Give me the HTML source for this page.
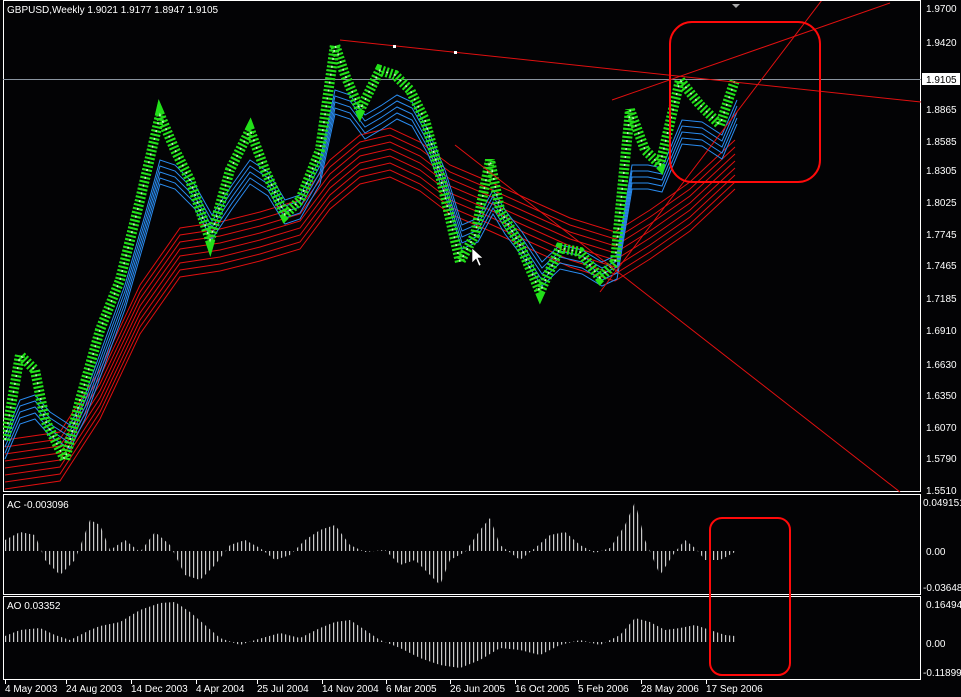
<!DOCTYPE html>
<html><head><style>
html,body{margin:0;padding:0;background:#030305;}
body{width:961px;height:697px;overflow:hidden;position:relative;font-family:"Liberation Sans",sans-serif;}
svg{position:absolute;left:0;top:0}
text{font-family:"Liberation Sans",sans-serif;font-size:10px;fill:#fff}
</style></head><body>
<svg width="961" height="697" viewBox="0 0 961 697">
<defs>
<pattern id="bars" width="4" height="200" patternUnits="userSpaceOnUse">
<rect x="1" y="0" width="1.2" height="200" fill="#c8c8c8"/>
</pattern>
<clipPath id="main"><rect x="3" y="1" width="918" height="491"/></clipPath>
</defs>
<rect x="3.5" y="0.5" width="917" height="491" fill="none" stroke="#fff"/>
<rect x="3.5" y="494.5" width="917" height="100" fill="none" stroke="#fff"/>
<rect x="3.5" y="596.5" width="917" height="83" fill="none" stroke="#fff"/>
<line x1="3" y1="79.5" x2="921" y2="79.5" stroke="#8a94a0"/>
<g clip-path="url(#main)">
<g fill="none" stroke="#e01010" stroke-width="1">
<path id="r" d="M5 440 L60 432 L100 370 L140 285 L180 228 L220 222 L260 212 L300 200 L330 160 L360 135 L390 128 L420 142 L450 165 L490 182 L530 200 L570 218 L615 232 L650 210 L690 182 L735 140"/>
<use href="#r" y="7"/><use href="#r" y="14"/><use href="#r" y="21"/><use href="#r" y="28"/><use href="#r" y="35"/><use href="#r" y="42"/><use href="#r" y="49"/>
</g>
<g fill="none" stroke="#2a8cf0" stroke-width="1">
<path id="b" d="M5 435 L20 400 L35 395 L50 412 L70 425 L85 395 L105 340 L125 285 L145 215 L160 160 L175 165 L195 185 L212 215 L232 185 L250 160 L268 172 L285 200 L300 195 L320 160 L335 90 L350 95 L365 115 L382 105 L397 95 L412 102 L428 130 L445 170 L462 225 L478 218 L493 190 L505 210 L522 232 L542 262 L560 245 L582 250 L602 262 L617 255 L632 165 L648 165 L662 168 L682 120 L702 122 L722 135 L737 100"/>
<use href="#b" y="6"/><use href="#b" y="12"/><use href="#b" y="18"/><use href="#b" y="24"/>
</g>
<path id="p" d="M5 440 L20 355 L35 370 L45 420 L65 460 L80 400 L100 330 L120 280 L140 200 L160 115 L175 150 L190 180 L210 240 L230 170 L250 130 L265 170 L285 215 L300 200 L320 150 L335 45 L345 75 L360 110 L380 70 L395 75 L410 90 L425 120 L440 175 L460 262 L475 235 L490 160 L500 210 L520 245 L540 292 L560 248 L580 252 L600 278 L615 262 L630 110 L645 150 L660 165 L680 80 L700 105 L720 125 L735 80" fill="none" stroke="#22e01a" stroke-width="10" stroke-dasharray="2 2"/>
<use href="#p" style="stroke-width:22;stroke-dasharray:1 7;opacity:.7"/>
<path d="M5 440 L20 355 L35 370 L45 420 L65 460 L80 400 L100 330 L120 280 L140 200 L160 115 L175 150 L190 180 L210 240 L230 170 L250 130 L265 170 L285 215 L300 200 L320 150 L335 45 L345 75 L360 110 L380 70 L395 75 L410 90 L425 120 L440 175 L460 262 L475 235 L490 160 L500 210 L520 245 L540 292 L560 248 L580 252 L600 278 L615 262 L630 110 L645 150 L660 165 L680 80 L700 105 L720 125 L735 80" fill="none" stroke="#ffffff" stroke-width="1.5" stroke-dasharray="2 6" opacity=".7"/>
<g stroke="#e01010" fill="none" stroke-width="1">
<line x1="340" y1="40" x2="921" y2="102"/>
<line x1="455" y1="145" x2="900" y2="492"/>
<line x1="612" y1="100" x2="890" y2="3"/>
<line x1="600" y1="292" x2="822" y2="0"/>
</g>
<rect x="670" y="22" width="150" height="160" rx="22" fill="none" stroke="#ff0a0a" stroke-width="2"/>
<rect x="393" y="45" width="3" height="3" fill="#fff"/><rect x="454" y="51" width="3" height="3" fill="#fff"/>
<path d="M472 248 L472 263 L476 259 L479 266 L481 265 L478 258 L483 258 Z" fill="#fff" stroke="#000" stroke-width=".6"/>
</g>
<path d="M732 4 L740 4 L736 8 Z" fill="#aaa"/>
<text x="7" y="13">GBPUSD,Weekly  1.9021 1.9177 1.8947 1.9105</text>
<g>
<text x="926" y="12">1.9700</text><text x="926" y="46">1.9420</text>
<rect x="922" y="73" width="38" height="12" fill="#fff"/><text x="926" y="83" style="fill:#000">1.9105</text>
<text x="926" y="113">1.8865</text><text x="926" y="145">1.8585</text><text x="926" y="174">1.8305</text>
<text x="926" y="206">1.8025</text><text x="926" y="238">1.7745</text><text x="926" y="269">1.7465</text>
<text x="926" y="302">1.7185</text><text x="926" y="334">1.6910</text><text x="926" y="368">1.6630</text>
<text x="926" y="399">1.6350</text><text x="926" y="431">1.6070</text><text x="926" y="462">1.5790</text>
<text x="926" y="494">1.5510</text>
<text x="923" y="506">0.049151</text><text x="926" y="555">0.00</text><text x="923" y="591">-0.03648</text>
<text x="926" y="608">0.16494</text><text x="926" y="647">0.00</text><text x="923" y="676">-0.11899</text>
</g>
<text x="7" y="508">AC -0.003096</text>
<path d="M5 551 L5 540 L20 532 L35 535 L45 560 L60 575 L75 560 L90 520 L100 525 L110 550 L125 540 L140 552 L155 532 L170 545 L185 575 L200 580 L215 565 L230 545 L245 540 L260 548 L275 560 L290 555 L305 540 L320 530 L335 525 L350 545 L365 552 L385 550 L400 565 L415 560 L430 575 L440 585 L450 560 L465 552 L480 530 L490 518 L500 545 L520 560 L535 548 L550 535 L565 532 L580 545 L595 553 L610 548 L625 525 L635 502 L645 540 L660 575 L675 552 L685 540 L695 548 L705 560 L720 560 L735 552 L735 551 Z" fill="url(#bars)"/>
<text x="7" y="609">AO 0.03352</text>
<path d="M5 642 L5 636 L20 630 L40 628 L55 635 L70 640 L90 630 L100 626 L120 622 L140 610 L160 603 L175 602 L190 612 L205 625 L220 638 L240 645 L255 640 L280 633 L300 638 L320 628 L335 622 L350 620 L365 630 L380 640 L400 648 L420 658 L440 665 L460 668 L480 660 L500 648 L520 650 L540 655 L560 645 L580 640 L600 645 L620 635 L635 618 L650 622 L665 630 L680 628 L695 625 L710 630 L725 635 L735 636 L735 642 Z" fill="url(#bars)"/>
<rect x="710" y="518" width="80" height="157" rx="12" fill="none" stroke="#ff0a0a" stroke-width="2"/>
<g stroke="#fff">
<line x1="5.5" y1="680" x2="5.5" y2="684"/><line x1="66.5" y1="680" x2="66.5" y2="684"/><line x1="131.5" y1="680" x2="131.5" y2="684"/><line x1="196.5" y1="680" x2="196.5" y2="684"/><line x1="257.5" y1="680" x2="257.5" y2="684"/><line x1="322.5" y1="680" x2="322.5" y2="684"/><line x1="386.5" y1="680" x2="386.5" y2="684"/><line x1="450.5" y1="680" x2="450.5" y2="684"/><line x1="515.5" y1="680" x2="515.5" y2="684"/><line x1="578.5" y1="680" x2="578.5" y2="684"/><line x1="641.5" y1="680" x2="641.5" y2="684"/><line x1="706.5" y1="680" x2="706.5" y2="684"/>
</g>
<g>
<text x="5" y="692">4 May 2003</text><text x="66" y="692">24 Aug 2003</text><text x="131" y="692">14 Dec 2003</text>
<text x="196" y="692">4 Apr 2004</text><text x="257" y="692">25 Jul 2004</text><text x="322" y="692">14 Nov 2004</text>
<text x="386" y="692">6 Mar 2005</text><text x="450" y="692">26 Jun 2005</text><text x="515" y="692">16 Oct 2005</text>
<text x="578" y="692">5 Feb 2006</text><text x="641" y="692">28 May 2006</text><text x="706" y="692">17 Sep 2006</text>
</g>
</svg>
</body></html>
